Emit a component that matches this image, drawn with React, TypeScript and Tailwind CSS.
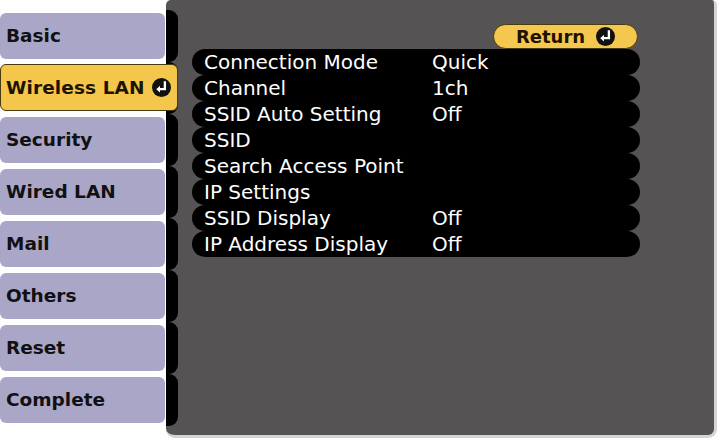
import React from 'react'

const TABS = ['Basic', 'Wireless LAN', 'Security', 'Wired LAN', 'Mail', 'Others', 'Reset', 'Complete']
const SELECTED = 1

const ROWS: [string, string][] = [
  ['Connection Mode', 'Quick'],
  ['Channel', '1ch'],
  ['SSID Auto Setting', 'Off'],
  ['SSID', ''],
  ['Search Access Point', ''],
  ['IP Settings', ''],
  ['SSID Display', 'Off'],
  ['IP Address Display', 'Off'],
]

function EnterIcon() {
  return (
    <svg width="19" height="19" viewBox="0 0 18 18" className="shrink-0">
      <circle cx="9" cy="9" r="9" fill="#111" />
      <path d="M12.2 4.2 V10.6 H7" stroke="#fff" strokeWidth="2.2" fill="none" strokeLinecap="square" />
      <path d="M4 10.6 L7.6 7.4 L7.6 13.8 Z" fill="#fff" />
    </svg>
  )
}

export default function App() {
  return (
    <div
      className="w-[720px] h-[440px] bg-white flex overflow-hidden select-none"
      style={{ fontFamily: '"DejaVu Sans", "Liberation Sans", sans-serif' }}
    >
      {/* tab column */}
      <div className="w-[166px] shrink-0 pt-[13px] flex flex-col gap-[6px] relative z-10">
        {TABS.map((t, i) =>
          i === SELECTED ? (
            <div
              key={t}
              className="w-[178px] h-[47px] -mt-[1px] rounded-[6px] bg-[#f4c64c] border-[1.5px] border-[#4a3a10] flex items-center pl-[5px] pr-[6px] justify-between"
            >
              <span className="text-[18.5px] font-bold text-[#1c1400] tracking-[0.1px]">{t}</span>
              <EnterIcon />
            </div>
          ) : (
            <div
              key={t}
              className="w-[165px] h-[46px] rounded-[6px] bg-[#aaa6c8] flex items-center pl-[6px]"
            >
              <span className="text-[18.5px] font-bold text-[#111]">{t}</span>
            </div>
          )
        )}
      </div>

      {/* main panel */}
      <div className="w-[551px] h-[438px] shrink-0 bg-[#555354] rounded-t-[5px] rounded-b-[9px] border-r-[3px] border-b-[3px] border-[#d4d4d4] flex">
        <div className="w-[12px] shrink-0 pt-[10px] flex flex-col">
          {TABS.map((t) => (
            <div key={t} className="h-[52px] bg-black rounded-r-[9px]" />
          ))}
        </div>

        <div className="w-[448px] ml-[14px] pt-[24px] flex flex-col">
          <div className="self-end mr-[2px] w-[145px] h-[25px] rounded-full bg-[#f4c74e] border-[1.5px] border-[#4a3a10] flex items-center justify-center gap-[11px]">
            <span className="text-[18px] font-bold text-[#1c1400] leading-none">Return</span>
            <EnterIcon />
          </div>
          <div className="flex flex-col">
            {ROWS.map(([label, value]) => (
              <div key={label} className="h-[26px] bg-black rounded-full flex items-center text-white text-[20px] leading-none">
                <span className="w-[240px] pl-[12px] shrink-0">{label}</span>
                <span>{value}</span>
              </div>
            ))}
          </div>
        </div>
      </div>
    </div>
  )
}
